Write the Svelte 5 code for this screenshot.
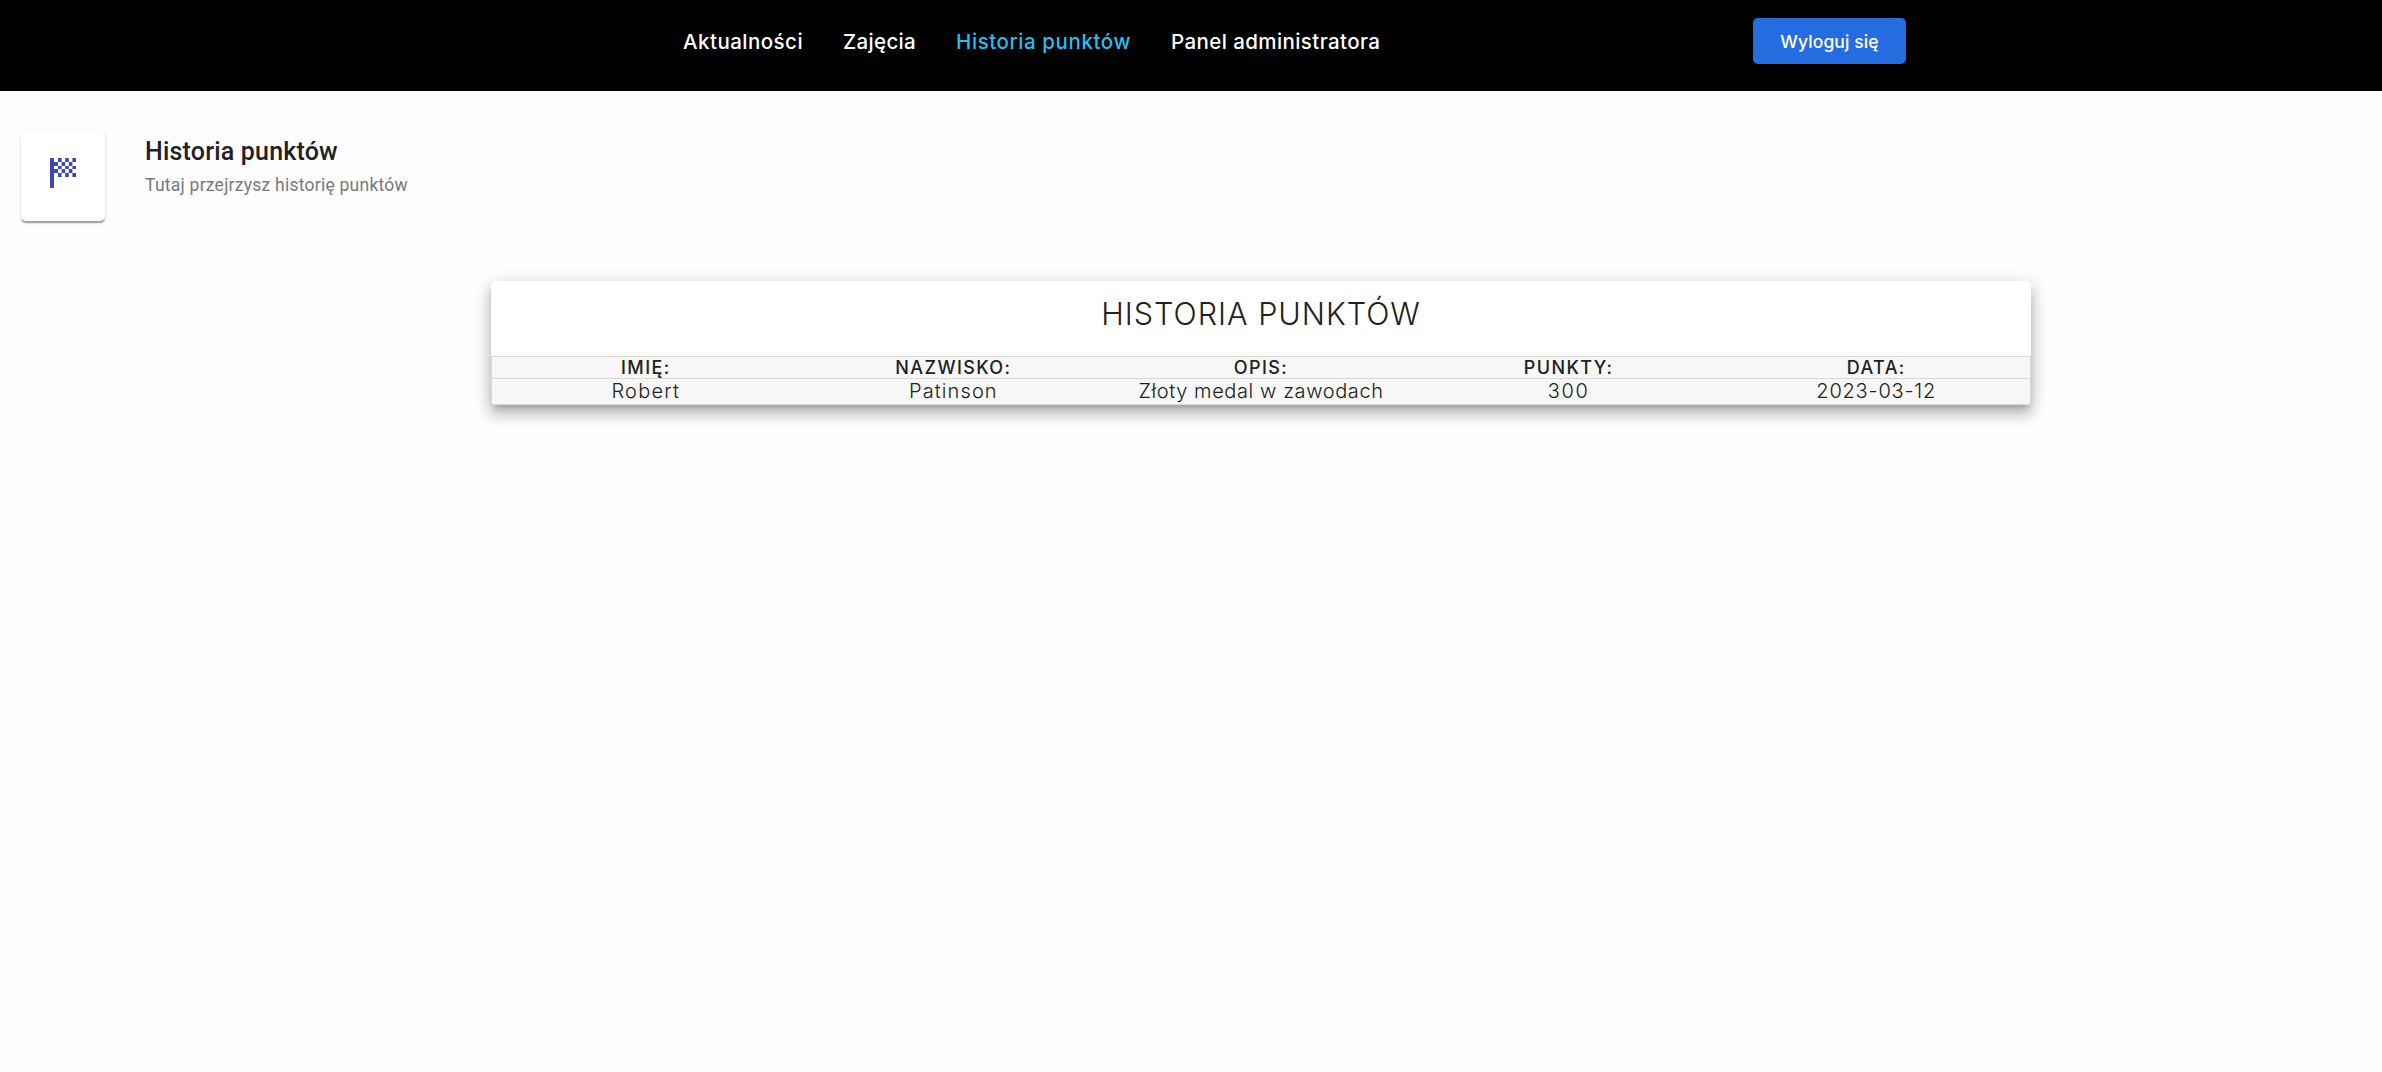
<script>
  const links = [
    { label: 'Aktualności', tracking: 0.47 },
    { label: 'Zajęcia', tracking: 0.34 },
    { label: 'Historia punktów', tracking: 0.58, active: true },
    { label: 'Panel administratora', tracking: 0.41 }
  ];
  const columns = ['IMIĘ:', 'NAZWISKO:', 'OPIS:', 'PUNKTY:', 'DATA:'];
  const rows = [
    [
      { text: 'Robert', tracking: 1.2 },
      { text: 'Patinson', tracking: 1.1 },
      { text: 'Złoty medal w zawodach', tracking: 0.6 },
      { text: '300', tracking: 1.6 },
      { text: '2023-03-12', tracking: 0.8 }
    ]
  ];
</script>

<div class="page">
  <header class="topbar">
    <nav>
      {#each links as link}
        <a href="#top" class:active={link.active} style="letter-spacing: {link.tracking}px">{link.label}</a>
      {/each}
    </nav>
    <button>Wyloguj się</button>
  </header>

  <section class="hero">
    <div class="icon-card">
      <svg viewBox="0 0 26 30" width="26" height="30" fill="#3f48ac">
        <path d="M0 0h4v30H0z" />
        <path d="M8 0h3.6v4H8zM15.2 0h3.6v4h-3.6zM22.4 0H26v4h-3.6z" />
        <path d="M4 4h4v4H4zM11.6 4h3.6v4h-3.6zM18.8 4h3.6v4h-3.6z" />
        <path d="M8 8h3.6v3H8zM15.2 8h3.6v3h-3.6zM22.4 8H26v3h-3.6z" />
        <path d="M4 11h4v4H4zM11.6 11h3.6v4h-3.6zM18.8 11h3.6v4h-3.6z" />
        <path d="M8 15h3.6v4H8zM15.2 15h3.6v4h-3.6zM22.4 15H26v4h-3.6z" />
      </svg>
    </div>
    <div class="intro">
      <h1>Historia punktów</h1>
      <p>Tutaj przejrzysz historię punktów</p>
    </div>
  </section>

  <main class="history">
    <h2>HISTORIA PUNKTÓW</h2>
    <div class="grid">
      <div class="row head">
        {#each columns as column}<span>{column}</span>{/each}
      </div>
      {#each rows as row}
        <div class="row body">
          {#each row as cell}<span style="letter-spacing: {cell.tracking}px">{cell.text}</span>{/each}
        </div>
      {/each}
    </div>
  </main>
</div>

<style>
  :global(body) {
    background: #fefefe;
  }
  .page {
    display: flex;
    flex-direction: column;
    min-height: 100vh;
    font-family: Inter, sans-serif;
    color: #212121;
  }
  .topbar {
    box-sizing: border-box;
    display: flex;
    justify-content: space-between;
    height: 91px;
    padding: 18px 476px 0 683px;
    background: #000;
  }
  nav {
    display: flex;
    gap: 40px;
    height: 46px;
    align-items: center;
  }
  a {
    color: #fff;
    font-size: 20.5px;
    font-weight: 500;
    text-decoration: none;
    white-space: nowrap;
  }
  .active {
    color: #26bfee;
  }
  button {
    width: 153px;
    height: 46px;
    padding: 0;
    border: 0;
    border-radius: 5px;
    background: #256ce1;
    color: #fff;
    font: 500 17.5px Inter, sans-serif;
    letter-spacing: 0.1px;
  }
  .hero {
    box-sizing: border-box;
    display: flex;
    gap: 40px;
    height: 170px;
    padding: 40px 21px;
    background: #fdfdff;
  }
  .icon-card {
    display: flex;
    box-sizing: border-box;
    width: 84px;
    height: 90px;
    padding: 27px 0 0 29px;
    border-radius: 5px;
    background: #fff;
    box-shadow: 0 2.5px 1.25px -1.25px rgba(0, 0, 0, 0.2), 0 1.25px 1.25px rgba(0, 0, 0, 0.14), 0 1.25px 3.75px rgba(0, 0, 0, 0.12);
  }
  h1,
  p {
    margin: 0;
    font-family: Roboto, sans-serif;
  }
  h1 {
    margin-top: 1px;
    font-size: 25px;
    font-weight: 500;
    line-height: 40px;
    letter-spacing: 0.19px;
  }
  p {
    color: #79797b;
    font-size: 17.5px;
    font-weight: 400;
    line-height: 27px;
    letter-spacing: 0.25px;
  }
  .history {
    width: 1540px;
    margin: 20px 0 0 491px;
    border-radius: 5px;
    background: #fff;
    box-shadow: 0 6.25px 6.25px -3.75px rgba(0, 0, 0, 0.2), 0 10px 12.5px 1.25px rgba(0, 0, 0, 0.14), 0 3.75px 17.5px 2.5px rgba(0, 0, 0, 0.12);
  }
  h2 {
    height: 75px;
    margin: 0;
    font-size: 30.5px;
    font-weight: 300;
    line-height: 65px;
    letter-spacing: 1px;
    text-align: center;
  }
  .grid {
    border: 1px solid #d9d9d9;
    border-radius: 0 0 3px 3px;
    background: #f7f7f7;
  }
  .row {
    display: grid;
    grid-template-columns: repeat(5, 1fr);
    text-align: center;
    white-space: nowrap;
  }
  .head {
    height: 21px;
    border-bottom: 1px solid #d9d9d9;
    font-size: 18px;
    font-weight: 550;
    line-height: 21px;
    letter-spacing: 1.4px;
  }
  .body {
    height: 25px;
    font-size: 20px;
    font-weight: 350;
    line-height: 25px;
  }
</style>
